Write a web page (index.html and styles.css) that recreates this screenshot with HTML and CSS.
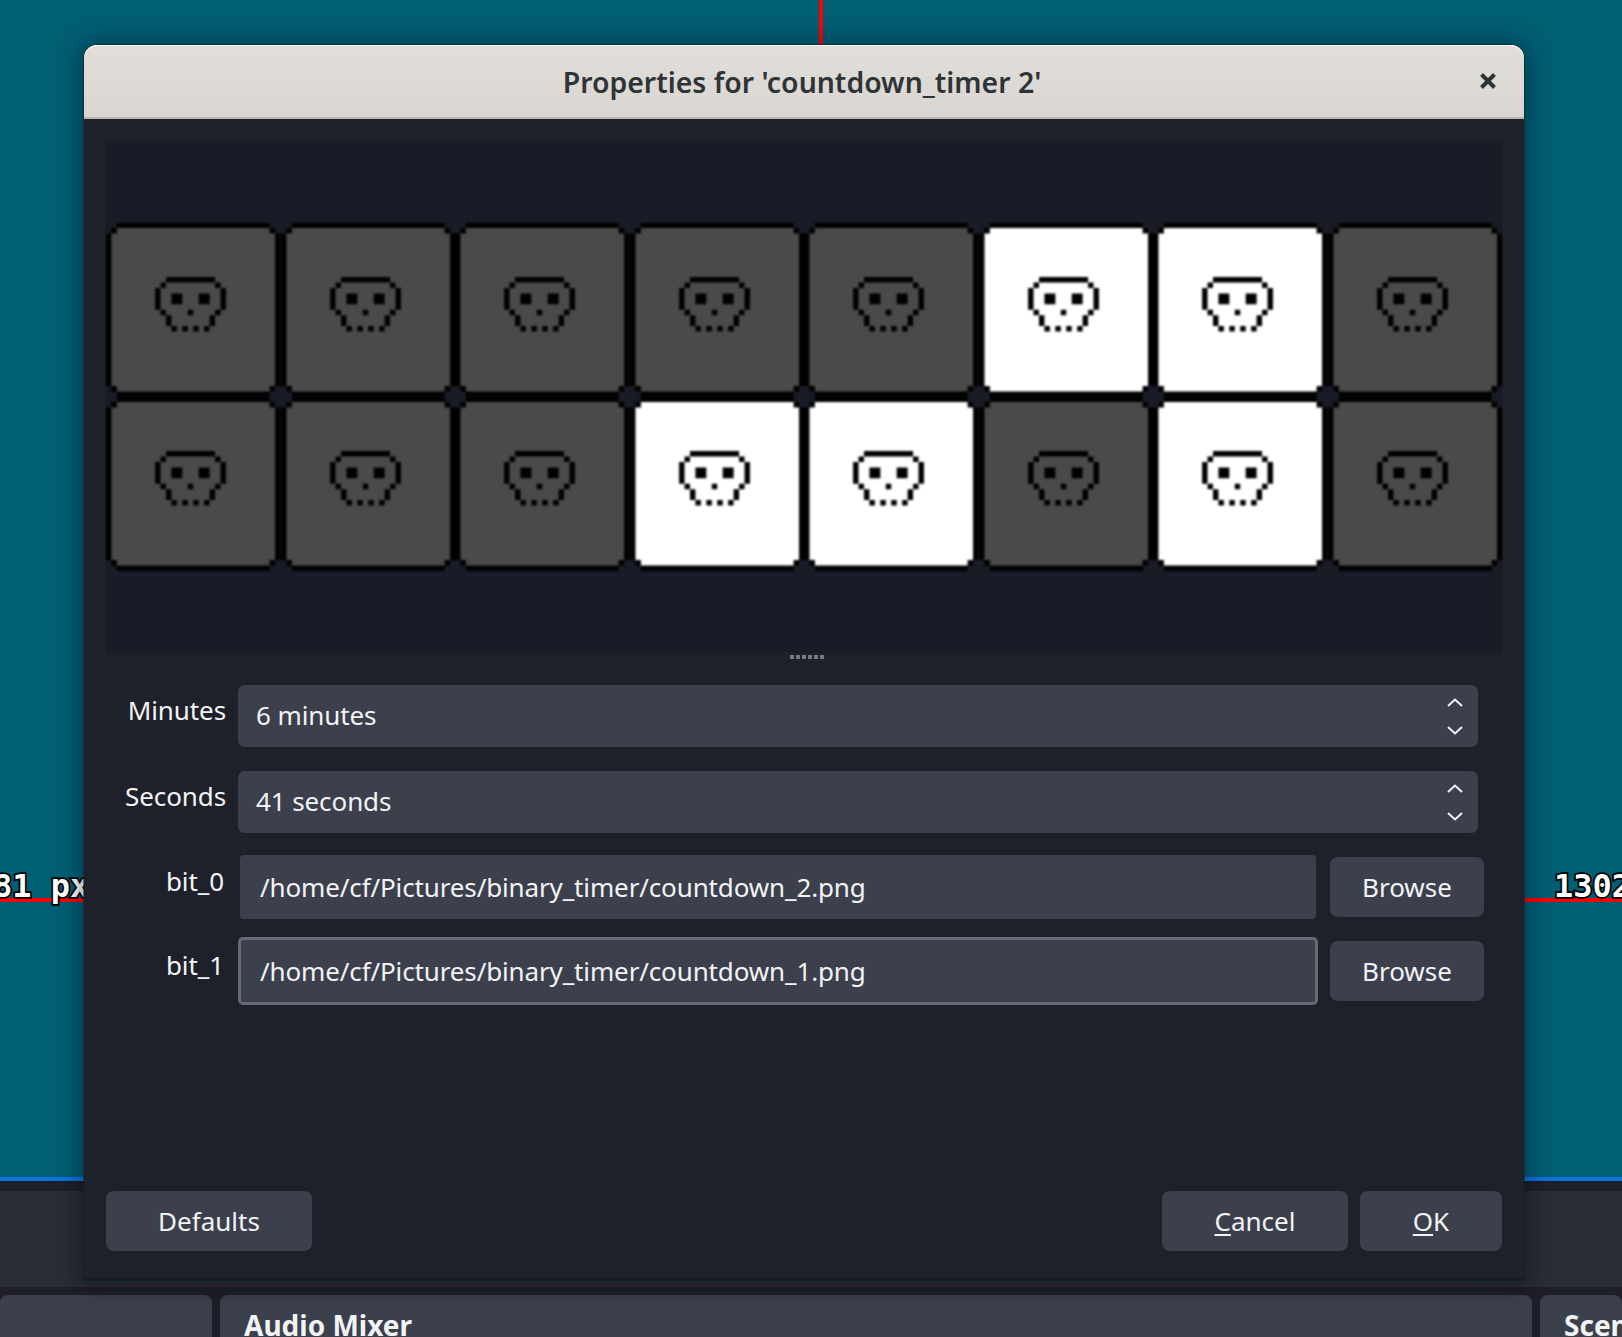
FILE: index.html
```html
<!DOCTYPE html>
<html lang="en">
<head>
<meta charset="utf-8">
<title>Properties for 'countdown_timer 2'</title>
<link rel="stylesheet" href="styles.css">
</head>
<body>
<svg class="defs" width="0" height="0" aria-hidden="true">
  <defs>
    <symbol id="tile" viewBox="0 0 32 32">
      <path class="tile-edge" d="M2 0H30V1H31V2H32V30H31V31H30V32H2V31H1V30H0V2H1V1H2Z"/>
      <path class="tile-face" d="M2 1H30V2H31V30H30V31H2V30H1V2H2Z"/>
      <path class="tile-skull" d="M11 10h9v1h-9zM10 11h1v1h-1zM20 11h1v1h-1zM9 12h1v4h-1zM21 12h1v4h-1zM10 16h1v1h-1zM20 16h1v1h-1zM11 17h1v2h-1zM19 17h1v2h-1zM12 19h1v1h-1zM14 19h1v1h-1zM16 19h1v1h-1zM18 19h1v1h-1zM12 13h2v2h-2zM17 13h2v2h-2zM15 16h1v1h-1z"/>
    </symbol>
    <symbol id="chev-up" viewBox="0 0 16 9"><path d="M1 8L8 1.5L15 8"/></symbol>
    <symbol id="chev-down" viewBox="0 0 16 9"><path d="M1 1L8 7.5L15 1"/></symbol>
  </defs>
</svg>
<div class="desktop">
  <div class="canvas">
    <div class="guide guide-top"></div>
    <div class="guide guide-left"></div>
    <div class="guide guide-right"></div>
    <div class="measure measure-left">81 px</div>
    <div class="measure measure-right">1302 px</div>
  </div>
  <div class="strip"></div>
  <div class="panel"></div>
  <div class="docks">
    <div class="dock dock-a"></div>
    <div class="dock dock-b">Audio Mixer</div>
    <div class="dock dock-c">Scene Transitions</div>
  </div>

  <div class="window">
    <header class="titlebar">
      <h1 class="title">Properties for 'countdown_timer 2'</h1>
      <svg class="close" viewBox="0 0 16 16" aria-label="Close"><path d="M1.5 1.5L14.5 14.5M14.5 1.5L1.5 14.5"/></svg>
    </header>
    <div class="content">
      <div class="preview">
        <div class="tiles">
          <svg class="tile off"><use href="#tile"/></svg>
          <svg class="tile off"><use href="#tile"/></svg>
          <svg class="tile off"><use href="#tile"/></svg>
          <svg class="tile off"><use href="#tile"/></svg>
          <svg class="tile off"><use href="#tile"/></svg>
          <svg class="tile on"><use href="#tile"/></svg>
          <svg class="tile on"><use href="#tile"/></svg>
          <svg class="tile off"><use href="#tile"/></svg>
          <svg class="tile off"><use href="#tile"/></svg>
          <svg class="tile off"><use href="#tile"/></svg>
          <svg class="tile off"><use href="#tile"/></svg>
          <svg class="tile on"><use href="#tile"/></svg>
          <svg class="tile on"><use href="#tile"/></svg>
          <svg class="tile off"><use href="#tile"/></svg>
          <svg class="tile on"><use href="#tile"/></svg>
          <svg class="tile off"><use href="#tile"/></svg>
        </div>
      </div>
      <div class="splitter"><i></i><i></i><i></i><i></i><i></i><i></i></div>
      <div class="form">
        <div class="row row-spin">
          <label class="label">Minutes</label>
          <div class="spin">
            <span class="value">6 minutes</span>
            <span class="arrows">
              <svg class="chev"><use href="#chev-up"/></svg>
              <svg class="chev"><use href="#chev-down"/></svg>
            </span>
          </div>
        </div>
        <div class="row row-spin">
          <label class="label">Seconds</label>
          <div class="spin">
            <span class="value">41 seconds</span>
            <span class="arrows">
              <svg class="chev"><use href="#chev-up"/></svg>
              <svg class="chev"><use href="#chev-down"/></svg>
            </span>
          </div>
        </div>
        <div class="row row-path row-first">
          <label class="label label-path">bit_0</label>
          <div class="field">/home/cf/Pictures/binary_timer/countdown_2.png</div>
          <div class="btn btn-browse">Browse</div>
        </div>
        <div class="row row-path row-second">
          <label class="label label-path">bit_1</label>
          <div class="field field-focus">/home/cf/Pictures/binary_timer/countdown_1.png</div>
          <div class="btn btn-browse">Browse</div>
        </div>
      </div>
      <div class="actions">
        <div class="btn btn-defaults">Defaults</div>
        <div class="btn btn-cancel"><span><u>C</u>ancel</span></div>
        <div class="btn btn-ok"><span><u>O</u>K</span></div>
      </div>
    </div>
  </div>
</div>
</body>
</html>
```
FILE: styles.css
```css
* { box-sizing: border-box; }
html, body { margin: 0; padding: 0; }
body { background: #1e1f29; font-family: "Noto Sans", "Open Sans", sans-serif; font-size: 26px; color: #f2f3f5; }
.defs { position: absolute; }

.desktop { position: relative; width: 1622px; height: 1337px; overflow: hidden; display: flex; flex-direction: column; }

/* Backdrop */
.canvas { position: relative; flex: none; height: 1181px; background: #005e75; border-bottom: 4px solid #0a72e6; }
.guide { position: absolute; background: #f00; }
.guide-top { left: 819px; top: 0; width: 4px; height: 46px; }
.guide-left { left: 0; top: 898px; width: 90px; height: 4px; }
.guide-right { left: 1520px; top: 898px; width: 102px; height: 4px; }
.measure { position: absolute; top: 868px; font-family: "DejaVu Sans Mono", monospace; font-weight: 700; font-size: 32px; line-height: 36px; color: #fff; white-space: nowrap; -webkit-text-stroke: 3.5px #000; paint-order: stroke fill; }
.measure-left { left: -7px; }
.measure-right { left: 1554px; }
.strip { flex: none; height: 10px; background: #1e2028; }
.panel { flex: none; height: 96px; background: #2a2c36; }
.docks { flex: 1; display: flex; gap: 8px; padding-top: 8px; background: #1e1f29; }
.dock { background: #3c404c; border-radius: 8px 8px 0 0; font-weight: 700; font-size: 28px; line-height: 36px; white-space: nowrap; overflow: hidden; padding: 12px 0 0 24px; }
.dock-a { flex: none; width: 212px; }
.dock-b { flex: none; width: 1312px; }
.dock-c { flex: 1; }

/* Dialog */
.window { position: absolute; left: 84px; top: 45px; width: 1440px; height: 1235px; display: flex; flex-direction: column; background: #1f212a; border-radius: 13px 13px 0 0; border-bottom: 2px solid #191a21; box-shadow: 0 0 0 1px rgba(0, 40, 50, .55), 0 2px 24px 4px rgba(0, 0, 0, .38); }
.titlebar { position: relative; flex: none; height: 74px; display: flex; align-items: center; justify-content: center; padding: 2px 4px 0 0; background: linear-gradient(#e2dfdb, #d9d5d1); border-bottom: 2px solid #bcb6ae; border-radius: 13px 13px 0 0; box-shadow: inset 0 1px 0 #fff; }
.title { margin: 0; font-size: 28.4px; font-weight: 600; line-height: 36px; color: #2e3436; }
.close { position: absolute; right: 28px; top: 28px; width: 16px; height: 16px; fill: none; stroke: #2e3436; stroke-width: 4; }

.content { flex: 1; display: flex; flex-direction: column; padding: 22px 22px 27px; }

.preview { flex: none; height: 512px; margin-bottom: 0; display: flex; align-items: center; background: #191b26; }
.tiles { width: 1396px; display: grid; grid-template-columns: repeat(8, 174.5px); grid-auto-rows: 174.5px; filter: blur(1px); transform: translateY(-.5px); }
.tile { width: 174.5px; height: 174.5px; display: block; }
.tile-edge, .tile-skull { fill: #000; }
.tile-face { fill: currentColor; }
.off { color: #4a4a4a; }
.on { color: #fff; }

.splitter { flex: none; height: 32px; display: flex; justify-content: center; gap: 2px; padding: 2px 0 0 0; margin-left: 6px; }
.splitter i { width: 4px; height: 4px; background: #777a82; }

.form { flex: 1; display: flex; flex-direction: column; }
.row { display: flex; align-items: center; }
.row-spin { height: 62px; margin-bottom: 24px; padding-right: 24px; }
.row-first { height: 64px; margin-top: -2px; }
.row-second { height: 68px; margin-top: 18px; }
.label { flex: none; width: 120px; text-align: right; line-height: 36px; padding: 0 0 13px 0; letter-spacing: -.1px; }
.label-path { padding: 0 2px 13px 0; }
.spin { flex: 1; height: 62px; margin-left: 12px; display: flex; align-items: center; justify-content: space-between; padding: 0 15px 0 18px; background: #3c404c; border-radius: 7px; }
.value { line-height: 36px; padding-bottom: 2px; letter-spacing: -.1px; }
.arrows { display: flex; flex-direction: column; gap: 19px; padding-top: 0; }
.chev { display: block; width: 16px; height: 9px; fill: none; stroke: #f2f3f5; stroke-width: 2; }
.field { height: 64px; width: 1076px; margin-left: 14px; padding-left: 20px; display: flex; align-items: center; background: #3c404c; border-radius: 4px; flex: none; letter-spacing: -.135px; }
.field-focus { height: 68px; width: 1080px; margin-left: 12px; padding-left: 19px; border: 3px solid #666975; border-radius: 5px; }
.btn { display: flex; align-items: center; justify-content: center; height: 60px; background: #3c404c; border-radius: 8px; flex: none; }
.btn-browse { width: 154px; margin-left: 14px; }
.row-second .btn-browse { margin-left: 12px; }
.actions { flex: none; display: flex; }
.btn-defaults { width: 206px; margin-right: auto; }
.btn-cancel { width: 186px; margin-right: 12px; }
.btn-ok { width: 142px; }
u { text-decoration-thickness: 2px; text-underline-offset: 3px; }
```
